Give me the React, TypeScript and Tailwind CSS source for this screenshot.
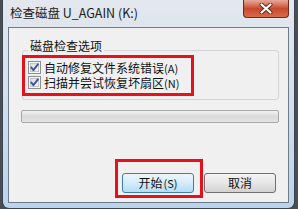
import React from "react";

const cjk = { fontFamily: '"Noto Sans CJK SC", "Noto Sans", sans-serif' };

function CheckBox() {
  return (
    <svg width="13" height="13" viewBox="0 0 13 13" className="shrink-0">
      <defs>
        <linearGradient id="cbg" x1="0" y1="0" x2="1" y2="1">
          <stop offset="0" stopColor="#dcdcdc" />
          <stop offset="1" stopColor="#fbfbfb" />
        </linearGradient>
      </defs>
      <rect x="0.5" y="0.5" width="12" height="12" fill="#f6f6f6" stroke="#8e8f8f" />
      <rect x="2.5" y="2.5" width="8" height="8" fill="url(#cbg)" stroke="#c2c6cc" />
      <path d="M3.2 6.4 L5.4 9.2 L9.9 3.3" fill="none" stroke="#3f55a4" strokeWidth="1.9" strokeLinecap="round" strokeLinejoin="round" />
    </svg>
  );
}

function Row({ text, hot }: { text: string; hot: string }) {
  return (
    <div className="flex h-[15px] items-center gap-[3px]">
      <CheckBox />
      <span className="text-[12px] leading-[12px] text-[#111]">
        {text}
        <span className="text-[11px]">({hot})</span>
      </span>
    </div>
  );
}

export default function App() {
  return (
    <div className="w-[298px] h-[209px] bg-[#4a4d52] overflow-hidden flex" style={cjk}>
      <div className="ml-[2px] w-[293px] h-[209px] border-x border-b border-[#3a4654] rounded-b-[7px] bg-gradient-to-b from-[#e3e8ee] via-[#d3deea] to-[#bcd3ec] flex flex-col">
        {/* title bar */}
        <div className="h-[27px] flex justify-between shrink-0">
          <div className="pl-[7px] pt-[6px] text-[12.5px] leading-[14px] text-[#1a1a1a]">
            检查磁盘 U_AGAIN (K:)
          </div>
          <div className="mr-[5px] w-[46px] h-[18px] rounded-b-[4px] border border-t-0 border-[#6b2a20] bg-gradient-to-b from-[#e8a898] via-[#c8492f] to-[#d86a4a] flex items-center justify-center">
            <svg width="14" height="11" viewBox="0 0 14 11">
              <path d="M2.5 1.5 L11.5 9.5 M11.5 1.5 L2.5 9.5" stroke="#5a2a22" strokeWidth="4" strokeLinecap="round" />
              <path d="M2.5 1.5 L11.5 9.5 M11.5 1.5 L2.5 9.5" stroke="#ffffff" strokeWidth="2.2" strokeLinecap="round" />
            </svg>
          </div>
        </div>
        {/* client area */}
        <div className="relative mx-[5px] h-[176px] border border-[#6d7c8d] bg-[#f0f0f0] flex flex-col">
          <fieldset className="mt-[12px] ml-[13px] w-[257px] border border-[#d3d6d9] rounded-[3px] pl-[5px] pb-[9px]">
            <legend className="ml-[0px] px-[2px] pb-[8px] text-[12px] leading-[12px] text-[#111]">
              磁盘检查选项
            </legend>
            <Row text="自动修复文件系统错误" hot="A" />
            <Row text="扫描并尝试恢复坏扇区" hot="N" />
          </fieldset>
          <div className="mt-[10px] ml-[12px] w-[258px] h-[13px] rounded-[2px] border border-[#a8a8a8] bg-gradient-to-b from-[#f2f2f2] via-[#d9d9d9] to-[#e4e4e4]" />
          <div className="mt-[50px] flex justify-end gap-[10px] pr-[12px]">
            <button className="w-[72px] h-[20px] rounded-[3px] border border-[#3c7fb1] bg-gradient-to-b from-[#eef7fc] via-[#d3ecf9] to-[#b5dcf3] text-[12px] leading-[12px] text-[#111] flex items-center justify-center">
              开始<span className="text-[11px] ml-[1px]">(S)</span>
            </button>
            <button className="w-[72px] h-[20px] rounded-[3px] border border-[#707070] bg-gradient-to-b from-[#f4f4f4] via-[#e6e6e6] to-[#d2d2d2] text-[12px] leading-[12px] text-[#111] flex items-center justify-center">
              取消
            </button>
          </div>
          {/* annotation boxes */}
          <div className="absolute left-[13px] top-[27px] w-[172px] h-[41px] border-[3px] border-[#e3121b]" />
          <div className="absolute left-[106px] top-[131px] w-[88px] h-[39px] border-[3px] border-[#e3121b]" />
        </div>
      </div>
    </div>
  );
}
